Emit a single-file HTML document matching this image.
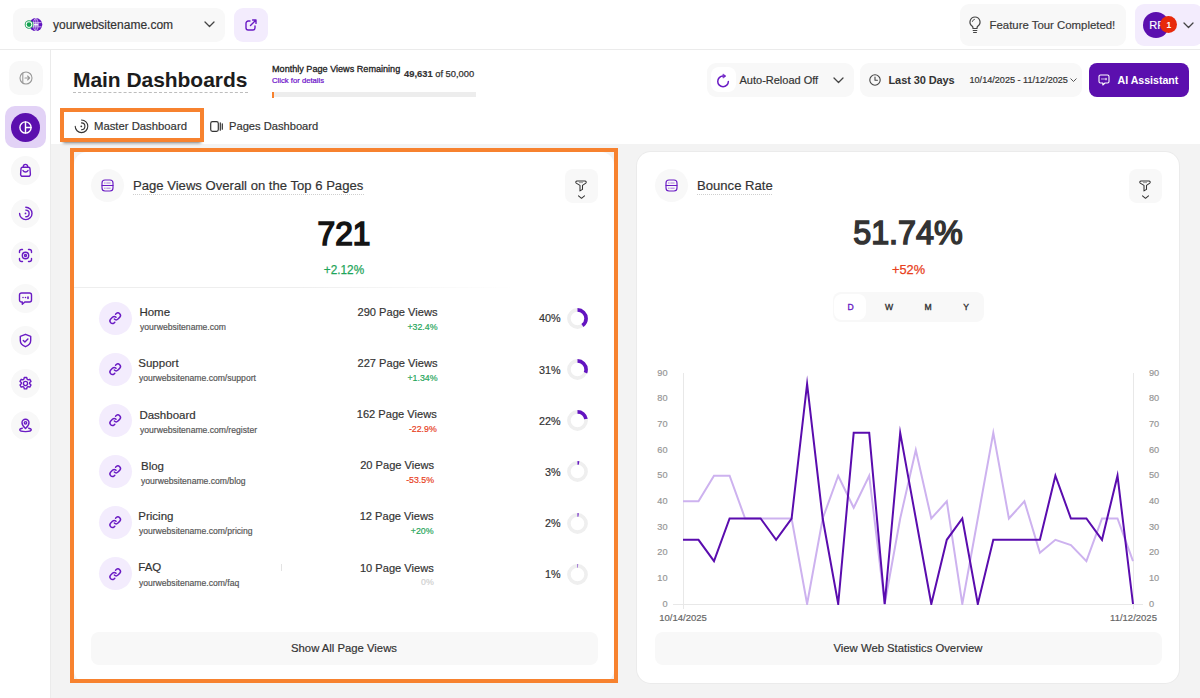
<!DOCTYPE html>
<html><head><meta charset="utf-8"><title>Main Dashboards</title>
<style>
*{box-sizing:border-box;margin:0;padding:0}
html,body{width:1200px;height:698px;overflow:hidden;background:#fff;font-family:"Liberation Sans",sans-serif;color:#333}
#topbar{position:absolute;left:0;top:0;width:1200px;height:50px;background:#fff;border-bottom:1px solid #ebebeb}
#sidebar{position:absolute;left:0;top:50px;width:51px;height:648px;background:#fff;border-right:1px solid #ebebeb}
#header{position:absolute;left:51px;top:50px;width:1149px;height:94px;background:#fff}
#content{position:absolute;left:51px;top:144px;width:1149px;height:554px;background:#f3f3f3}
.t{position:absolute;white-space:nowrap;line-height:1;-webkit-text-stroke:0.18px currentColor}
.box{position:absolute;background:#f8f8f8;border-radius:9px}
.card{position:absolute;background:#fff;border-radius:13px}
svg{position:absolute;overflow:visible}
.ic{fill:none;stroke:#6a1bc4;stroke-width:1.4;stroke-linecap:round;stroke-linejoin:round}
.sb{position:absolute;left:11px;width:29px;height:29px;border-radius:50%;background:#f8f8f8}
.lk{position:absolute;left:99px;width:33px;height:33px;border-radius:50%;background:#f3ecfd}
.g{color:#1fa55a}.r{color:#e8401c}
.ax{color:#969696}
</style></head><body>
<div id="topbar"></div><div id="sidebar"></div><div id="header"></div><div id="content"></div>
<div class="box" style="left:13px;top:8px;width:212px;height:34px"></div>
<svg style="left:24px;top:17px" width="20" height="16" viewBox="0 0 20 16">
<circle cx="11.800" cy="7.600" r="6.500" fill="#6214c0"/>
<g stroke="#fff" stroke-width="0.700" fill="none" opacity=".85"><ellipse cx="11.800" cy="7.600" rx="2.400" ry="6.200"/><path d="M6 5.600h11.600M6 9.800h11.600M11.800 1.400v12.400"/></g><rect x="9.200" y="6.600" width="5" height="2" fill="#fff" opacity=".9"/>
<circle cx="5" cy="7.600" r="4.250" fill="#1fa55a"/><circle cx="5" cy="7.600" r="3.300" fill="#fff"/><circle cx="5" cy="7.600" r="2.300" fill="#12a150"/>
</svg>
<div class="t " style="top:29.2px;font-size:12px;margin-top:-0.8465em;left:53px;color:#333;">yourwebsitename.com</div>
<svg style="left:204px;top:21px" width="11" height="7" viewBox="0 0 11 7"><path d="M1 1l4.5 4.5L10 1" fill="none" stroke="#444" stroke-width="1.3" stroke-linecap="round" stroke-linejoin="round"/></svg>
<div class="box" style="left:234px;top:8px;width:34px;height:34px;background:#f3ecfd"></div>
<svg class="ic" style="left:245px;top:19px" width="12" height="12" viewBox="0 0 12 12"><path d="M5 2H3.2A2.2 2.2 0 0 0 1 4.200V8.800A2.200 2.200 0 0 0 3.200 11H7.800A2.200 2.200 0 0 0 10 8.800V7"/><path d="M5.500 6.500L10.800 1.200M7.600 1H11V4.400"/></svg>
<div class="box" style="left:960px;top:4px;width:166px;height:42px"></div>
<svg style="left:969px;top:16px" width="12" height="18" viewBox="0 0 12 18" fill="none" stroke="#444" stroke-width="1.2" stroke-linecap="round" stroke-linejoin="round"><path d="M6 1a5 5 0 0 0-3 9c.6.500 1 1.200 1 2v.500h4V12c0-.8.400-1.500 1-2a5 5 0 0 0-3-9z"/><path d="M4.200 14.500h3.600M4.600 16.500h2.800"/><path d="M3.300 5.500A2.800 2.800 0 0 1 5.500 3.300" stroke-width="0.9"/></svg>
<div class="t " style="top:29.2px;font-size:11.4px;margin-top:-0.8465em;left:989.5px;color:#3a3a3a;">Feature Tour Completed!</div>
<div class="box" style="left:1135px;top:4px;width:68px;height:42px;background:#f3ecfd"></div>
<div style="position:absolute;left:1143px;top:11.700px;width:26px;height:26px;border-radius:50%;background:#5b0fae"></div>
<div class="t " style="top:29px;font-size:11px;margin-top:-0.8465em;left:1149.3px;color:#fff;">RP</div>
<div style="position:absolute;left:1160.400px;top:16.200px;width:17px;height:17px;border-radius:50%;background:#e8290b"></div>
<div class="t " style="top:27.8px;font-size:8.5px;margin-top:-0.8465em;left:1158.8px;width:20px;text-align:center;color:#fff;font-weight:700;-webkit-text-stroke:0;">1</div>
<svg style="left:1183px;top:22px" width="11" height="7" viewBox="0 0 11 7"><path d="M1 1l4.500 4.500L10 1" fill="none" stroke="#444" stroke-width="1.3" stroke-linecap="round" stroke-linejoin="round"/></svg>
<div class="box" style="left:9px;top:61px;width:34px;height:34px;border-radius:10px"></div>
<svg style="left:19px;top:71px" width="14" height="14" viewBox="0 0 14 14" fill="none" stroke="#999" stroke-width="1.1" stroke-linecap="round" stroke-linejoin="round"><circle cx="7" cy="7" r="6"/><path d="M3.800 2v10M6 7h4.500M8.600 5l2 2-2 2"/></svg>
<div class="box" style="left:5px;top:106px;width:41px;height:42px;border-radius:10px;background:#e2d2f6"></div>
<div style="position:absolute;left:11px;top:112.500px;width:29px;height:29px;border-radius:50%;background:#5b0fae"></div>
<svg style="left:19px;top:120.500px" width="13" height="13" viewBox="0 0 13 13" fill="none" stroke="#fff" stroke-width="1.4" stroke-linecap="round"><circle cx="6.500" cy="6.500" r="5.600"/><path d="M6.500 1v11M6.500 6.500H12"/></svg>
<div class="sb" style="top:155.5px"></div><svg class="ic" style="left:18px;top:162.5px" width="15" height="15" viewBox="0 0 15 15"><path d="M3 5.800a1.500 1.500 0 0 1 1.500-1.500h6a1.500 1.500 0 0 1 1.500 1.500l.4 5.400a2 2 0 0 1-2 2.100H4.600a2 2 0 0 1-2-2.100z"/><path d="M5.300 4.300V3.600a2.200 2.200 0 0 1 4.400 0v.7"/><path d="M5 7.500c.5 1 1.500 1.500 2.500 1.500S9.500 8.500 10 7.500"/></svg>
<div class="sb" style="top:198.5px"></div><svg class="ic" style="left:18px;top:205.5px" width="15" height="15" viewBox="0 0 15 15"><path d="M7.800 1.200A6.200 6.200 0 1 1 1.600 7.400"/><path d="M7.800 4.100A3.300 3.300 0 0 1 7.800 10.700"/><circle cx="7.500" cy="7.400" r="0.900" fill="#6a1bc4" stroke="none"/></svg>
<div class="sb" style="top:241.0px"></div><svg class="ic" style="left:18px;top:248.0px" width="15" height="15" viewBox="0 0 15 15"><path d="M1.500 4.500V3.500a2 2 0 0 1 2-2h1M10.500 1.500h1a2 2 0 0 1 2 2v1M13.500 10.500v1a2 2 0 0 1-2 2h-1M4.500 13.500h-1a2 2 0 0 1-2-2v-1"/><circle cx="7.500" cy="7.500" r="3.200"/><circle cx="7.500" cy="7.500" r="1"/></svg>
<div class="sb" style="top:283.5px"></div><svg class="ic" style="left:18px;top:290.5px" width="15" height="15" viewBox="0 0 15 15"><path d="M3.500 2h8a2 2 0 0 1 2 2v5a2 2 0 0 1-2 2H6.800L4.300 13.200V11H3.500a2 2 0 0 1-2-2V4a2 2 0 0 1 2-2z"/><path d="M5 6.500h.01M7.500 6.500h.01M10 6v1.500" stroke-width="1.600"/></svg>
<div class="sb" style="top:326.0px"></div><svg class="ic" style="left:18px;top:333.0px" width="15" height="15" viewBox="0 0 15 15"><path d="M7.500 1.300l5.200 2v4.200c0 3-2.200 5-5.200 6.200-3-1.200-5.200-3.200-5.200-6.200V3.300z"/><path d="M5.300 7.500l1.600 1.600 3-3"/></svg>
<div class="sb" style="top:368.5px"></div><svg class="ic" style="left:18px;top:375.5px" width="15" height="15" viewBox="0 0 15 15"><circle cx="7.500" cy="7.500" r="2.100"/><path d="M6.300 1.500h2.400l.4 1.700 1 .6 1.700-.5 1.200 2.100-1.300 1.200v1.200l1.300 1.200-1.200 2.100-1.700-.5-1 .6-.4 1.700H6.300l-.4-1.700-1-.6-1.700.5-1.200-2.100 1.300-1.200V6.600L2 5.400l1.200-2.100 1.700.5 1-.6z"/></svg>
<div class="sb" style="top:411.0px"></div><svg class="ic" style="left:18px;top:418.0px" width="15" height="15" viewBox="0 0 15 15"><path d="M7.500 10.500s3.500-3 3.500-5.700a3.500 3.500 0 0 0-7 0c0 2.700 3.500 5.700 3.500 5.700z"/><circle cx="7.500" cy="4.800" r="1.200"/><path d="M4.300 10.200c-1.600.3-2.600.9-2.600 1.600 0 1 2.600 1.800 5.800 1.800s5.800-.8 5.800-1.800c0-.7-1-1.300-2.600-1.600"/></svg>
<div class="t " style="top:86.6px;font-size:21px;margin-top:-0.8465em;left:73px;font-weight:700;color:#1c1c1c;letter-spacing:-0.05px;-webkit-text-stroke:0;">Main Dashboards</div>
<div style="position:absolute;left:73px;top:92px;width:175px;height:0;border-top:1px dashed #bdbdbd"></div>
<div class="t " style="top:73px;font-size:9.1px;margin-top:-0.8465em;left:272px;color:#222;-webkit-text-stroke:0.3px #222;">Monthly Page Views Remaining</div>
<div class="t " style="top:83.5px;font-size:7.7px;margin-top:-0.8465em;left:272px;color:#6a0dc9;-webkit-text-stroke:0.2px #6a0dc9;">Click for details</div>
<div class="t " style="top:78px;font-size:9.35px;margin-top:-0.8465em;left:404px;color:#333;"><b>49,631</b> <span style="-webkit-text-stroke:0.25px #333">of 50,000</span></div>
<div style="position:absolute;left:272px;top:91.500px;width:204px;height:5.800px;background:#ededed"></div><div style="position:absolute;left:272px;top:91.500px;width:1.600px;height:6px;background:#f7822f"></div>
<div class="box" style="left:707px;top:63px;width:147px;height:34px"></div>
<div style="position:absolute;left:711px;top:67px;width:24.500px;height:25.300px;border-radius:8px;background:#fff"></div>
<svg class="ic" style="left:717px;top:73.500px;stroke-width:1.500" width="13" height="13" viewBox="0 0 13 13"><path d="M11.350 7.400A5.300 5.300 0 1 1 6.050 2.100"/><path d="M6.300 0.200L8.900 2.100 6.300 3.900z" fill="#6a1bc4" stroke-width=".6"/></svg>
<div class="t " style="top:84px;font-size:11px;margin-top:-0.8465em;left:739.5px;color:#333;">Auto-Reload Off</div>
<svg style="left:832.500px;top:77px" width="11" height="7" viewBox="0 0 11 7"><path d="M1 1l4.500 4.500L10 1" fill="none" stroke="#444" stroke-width="1.300" stroke-linecap="round" stroke-linejoin="round"/></svg>
<div class="box" style="left:860px;top:63px;width:222px;height:34px"></div>
<svg style="left:869px;top:74px" width="12" height="12" viewBox="0 0 12 12" fill="none" stroke="#444" stroke-width="1.100" stroke-linecap="round" stroke-linejoin="round"><circle cx="6" cy="6" r="5.200"/><path d="M6 3v3.200h2.400"/></svg>
<div class="t " style="top:84px;font-size:11px;margin-top:-0.8465em;left:888.5px;font-weight:700;color:#333;letter-spacing:-0.1px;-webkit-text-stroke:0;">Last 30 Days</div>
<div class="t " style="top:83.3px;font-size:9.1px;margin-top:-0.8465em;left:969.5px;color:#333;">10/14/2025 - 11/12/2025</div>
<svg style="left:1070px;top:77.500px" width="7" height="5" viewBox="0 0 7 5"><path d="M.8.800l2.700 2.700L6.200.8" fill="none" stroke="#555" stroke-width="1" stroke-linecap="round" stroke-linejoin="round"/></svg>
<div class="box" style="left:1088.500px;top:63px;width:100px;height:34px;background:#5b0fae;border-radius:8px"></div>
<svg style="left:1097.500px;top:74px" width="12" height="12" viewBox="0 0 12 12" fill="none" stroke="#fff" stroke-width="1.100" stroke-linecap="round" stroke-linejoin="round"><path d="M2.500 1h7A1.500 1.500 0 0 1 11 2.500v5A1.500 1.500 0 0 1 9.500 9H7L4.800 11V9H2.500A1.500 1.500 0 0 1 1 7.500v-5A1.500 1.500 0 0 1 2.500 1z"/><path d="M4 5h.01M6 5h.01M8 4.500v1.200" stroke-width="1.300"/></svg>
<div class="t " style="top:84px;font-size:10.6px;margin-top:-0.8465em;left:1117.5px;font-weight:700;color:#fff;-webkit-text-stroke:0;">AI Assistant</div>
<div style="position:absolute;left:60px;top:108px;width:144px;height:34px;border:4px solid #f7822f;background:#fff;box-shadow:0 4px 3px -3px rgba(0,0,0,.55)"></div>
<svg style="left:74px;top:119px" width="15" height="15" viewBox="0 0 15 15" fill="none" stroke="#333" stroke-width="1.100" stroke-linecap="round"><path d="M7.500 1A6.300 6.300 0 1 1 1.200 7.300"/><path d="M7.500 3.900A3.400 3.400 0 0 1 7.500 10.700"/><circle cx="7.300" cy="7.300" r="0.900" fill="#333" stroke="none"/></svg>
<div class="t " style="top:130.2px;font-size:11.3px;margin-top:-0.8465em;left:94px;color:#333;">Master Dashboard</div>
<svg style="left:210px;top:120.500px" width="13" height="11" viewBox="0 0 13 11" fill="none" stroke="#333" stroke-width="1.200" stroke-linecap="round"><rect x=".7" y=".7" width="7.600" height="9.600" rx="1.800"/><path d="M10.300 1.800v7.400M12.300 2.800v5.400"/></svg>
<div class="t " style="top:130.2px;font-size:11.15px;margin-top:-0.8465em;left:229px;color:#333;">Pages Dashboard</div>
<div class="card" style="left:74px;top:152px;width:540px;height:531px"></div>
<div class="card" style="left:637px;top:151.500px;width:542px;height:531.500px;border-radius:14px;box-shadow:0 0 0 1px #ebebeb"></div>
<div style="position:absolute;left:91.0px;top:169px;width:33px;height:33px;border-radius:50%;background:#f8f8f8"></div>
<svg class="ic" style="left:101.0px;top:178.500px" width="13" height="13" viewBox="0 0 13 13"><rect x="1" y="1" width="11" height="11" rx="3" stroke-width="1.150"/><path d="M1 6.500h11" stroke-width="1.050"/><path d="M3.500 4h.700M5.700 4h3.500M3.500 9.200h.700M5.700 9.200h3.500" stroke-width=".8" opacity=".7"/></svg>
<div class="box" style="left:565px;top:169px;width:33px;height:33.500px;border-radius:8px"></div>
<svg style="left:575.2px;top:180.200px" width="12" height="12" viewBox="0 0 12 12" fill="none" stroke="#333" stroke-width="1.050" stroke-linejoin="round"><path d="M2 1H10a1.200 1.200 0 0 1 .8 2.100L7.500 5.400V9.400L5 10.900V5.400L1.200 3.100A1.200 1.200 0 0 1 2 1z"/><path d="M4 2.600h4" stroke-width=".9" opacity=".5"/></svg>
<svg style="left:577.7px;top:194.700px" width="7" height="5" viewBox="0 0 7 5"><path d="M.5.800l3 2.500L6.500.8" fill="none" stroke="#333" stroke-width="1.050" stroke-linecap="round" stroke-linejoin="round"/></svg>
<div style="position:absolute;left:655.0px;top:169px;width:33px;height:33px;border-radius:50%;background:#f8f8f8"></div>
<svg class="ic" style="left:665.0px;top:178.500px" width="13" height="13" viewBox="0 0 13 13"><rect x="1" y="1" width="11" height="11" rx="3" stroke-width="1.150"/><path d="M1 6.500h11" stroke-width="1.050"/><path d="M3.500 4h.700M5.700 4h3.500M3.500 9.200h.700M5.700 9.200h3.500" stroke-width=".8" opacity=".7"/></svg>
<div class="box" style="left:1129px;top:169px;width:33px;height:33.500px;border-radius:8px"></div>
<svg style="left:1139.2px;top:180.200px" width="12" height="12" viewBox="0 0 12 12" fill="none" stroke="#333" stroke-width="1.050" stroke-linejoin="round"><path d="M2 1H10a1.200 1.200 0 0 1 .8 2.100L7.500 5.400V9.400L5 10.900V5.400L1.200 3.100A1.200 1.200 0 0 1 2 1z"/><path d="M4 2.600h4" stroke-width=".9" opacity=".5"/></svg>
<svg style="left:1141.7px;top:194.700px" width="7" height="5" viewBox="0 0 7 5"><path d="M.5.800l3 2.500L6.500.8" fill="none" stroke="#333" stroke-width="1.050" stroke-linecap="round" stroke-linejoin="round"/></svg>
<div class="t " style="top:190px;font-size:13.1px;margin-top:-0.8465em;left:133px;color:#333;">Page Views Overall on the Top 6 Pages</div>
<div style="position:absolute;left:133px;top:193.500px;width:231px;border-top:1px dotted #cfcfcf"></div>
<div class="t " style="top:190px;font-size:13.1px;margin-top:-0.8465em;left:697px;color:#333;">Bounce Rate</div>
<div style="position:absolute;left:697px;top:193.500px;width:75px;border-top:1px dotted #cfcfcf"></div>
<div class="t " style="top:244.8px;font-size:33px;margin-top:-0.8465em;left:244.0px;width:200px;text-align:center;color:#141414;-webkit-text-stroke:1.700px #141414;transform:scaleX(.96);">721</div>
<div class="t g" style="top:274.4px;font-size:12.8px;margin-top:-0.8465em;left:294.0px;width:100px;text-align:center;-webkit-text-stroke:0.25px #1fa55a;transform:scaleX(.92);">+2.12%</div>
<div class="t " style="top:244.2px;font-size:32.5px;margin-top:-0.8465em;left:758.0px;width:300px;text-align:center;color:#333;-webkit-text-stroke:1.500px #333;transform:scaleX(.995);">51.74%</div>
<div class="t r" style="top:274.6px;font-size:12.8px;margin-top:-0.8465em;left:858.5px;width:100px;text-align:center;-webkit-text-stroke:0.25px #e8401c;">+52%</div>
<div style="position:absolute;left:74px;top:286.800px;width:440px;height:1px;background:linear-gradient(90deg,#eee 0,#eee 50%,rgba(238,238,238,0) 100%)"></div>
<div class="lk" style="top:301.7px"></div><svg class="ic" style="left:109.300px;top:312.0px;stroke-width:1.550" width="12.400" height="12.400" viewBox="0 0 13 13"><path d="M5.600 7.400a2.700 2.700 0 0 0 3.800 0l2-2a2.700 2.700 0 0 0-3.800-3.800l-.7.700"/><path d="M7.400 5.600a2.700 2.700 0 0 0-3.800 0l-2 2a2.700 2.700 0 0 0 3.800 3.800l.7-.7"/></svg>
<div class="t " style="top:316.4px;font-size:11.5px;margin-top:-0.8465em;left:139.4px;color:#333;">Home</div>
<div class="t " style="top:330.3px;font-size:8.6px;margin-top:-0.8465em;left:140.0px;color:#555;">yourwebsitename.com</div>
<div class="t " style="top:316.4px;font-size:11.1px;margin-top:-0.8465em;left:137.5px;width:300px;text-align:right;color:#333;">290 Page Views</div>
<div class="t " style="top:330.2px;font-size:8.8px;margin-top:-0.8465em;left:137.5px;width:300px;text-align:right;color:#1fa55a;">+32.4%</div>
<div class="t " style="top:322.6px;font-size:10.8px;margin-top:-0.8465em;left:260.70000000000005px;width:300px;text-align:right;color:#333;">40%</div>
<svg style="left:565.500px;top:307.1px" width="23" height="23" viewBox="0 0 23 23"><circle cx="11.500" cy="11.500" r="8.6" fill="none" stroke="#efefef" stroke-width="3.600"/><circle cx="11.500" cy="11.500" r="8.6" fill="none" stroke="#6314c0" stroke-width="3.600" stroke-dasharray="21.61 54.04" transform="rotate(-90 11.500 11.500)"/></svg>
<div class="lk" style="top:352.8px"></div><svg class="ic" style="left:109.300px;top:363.1px;stroke-width:1.550" width="12.400" height="12.400" viewBox="0 0 13 13"><path d="M5.600 7.400a2.700 2.700 0 0 0 3.800 0l2-2a2.700 2.700 0 0 0-3.800-3.800l-.7.700"/><path d="M7.400 5.600a2.700 2.700 0 0 0-3.800 0l-2 2a2.700 2.700 0 0 0 3.800 3.800l.7-.7"/></svg>
<div class="t " style="top:367.5px;font-size:11.5px;margin-top:-0.8465em;left:138.3px;color:#333;">Support</div>
<div class="t " style="top:381.4px;font-size:8.6px;margin-top:-0.8465em;left:138.9px;color:#555;">yourwebsitename.com/support</div>
<div class="t " style="top:367.5px;font-size:11.1px;margin-top:-0.8465em;left:137.5px;width:300px;text-align:right;color:#333;">227 Page Views</div>
<div class="t " style="top:381.3px;font-size:8.8px;margin-top:-0.8465em;left:137.5px;width:300px;text-align:right;color:#1fa55a;">+1.34%</div>
<div class="t " style="top:373.7px;font-size:10.8px;margin-top:-0.8465em;left:260.70000000000005px;width:300px;text-align:right;color:#333;">31%</div>
<svg style="left:565.500px;top:358.2px" width="23" height="23" viewBox="0 0 23 23"><circle cx="11.500" cy="11.500" r="8.6" fill="none" stroke="#efefef" stroke-width="3.600"/><circle cx="11.500" cy="11.500" r="8.6" fill="none" stroke="#6314c0" stroke-width="3.600" stroke-dasharray="16.75 54.04" transform="rotate(-90 11.500 11.500)"/></svg>
<div class="lk" style="top:403.9px"></div><svg class="ic" style="left:109.300px;top:414.2px;stroke-width:1.550" width="12.400" height="12.400" viewBox="0 0 13 13"><path d="M5.600 7.400a2.700 2.700 0 0 0 3.800 0l2-2a2.700 2.700 0 0 0-3.800-3.800l-.7.700"/><path d="M7.400 5.600a2.700 2.700 0 0 0-3.800 0l-2 2a2.700 2.700 0 0 0 3.800 3.800l.7-.7"/></svg>
<div class="t " style="top:419.4px;font-size:11.5px;margin-top:-0.8465em;left:139.4px;color:#333;">Dashboard</div>
<div class="t " style="top:433.3px;font-size:8.6px;margin-top:-0.8465em;left:140.0px;color:#555;">yourwebsitename.com/register</div>
<div class="t " style="top:418.6px;font-size:11.1px;margin-top:-0.8465em;left:136.75px;width:300px;text-align:right;color:#333;">162 Page Views</div>
<div class="t " style="top:432.4px;font-size:8.8px;margin-top:-0.8465em;left:136.75px;width:300px;text-align:right;color:#e8401c;">-22.9%</div>
<div class="t " style="top:424.8px;font-size:10.8px;margin-top:-0.8465em;left:260.70000000000005px;width:300px;text-align:right;color:#333;">22%</div>
<svg style="left:565.500px;top:409.3px" width="23" height="23" viewBox="0 0 23 23"><circle cx="11.500" cy="11.500" r="8.6" fill="none" stroke="#efefef" stroke-width="3.600"/><circle cx="11.500" cy="11.500" r="8.6" fill="none" stroke="#6314c0" stroke-width="3.600" stroke-dasharray="11.89 54.04" transform="rotate(-90 11.500 11.500)"/></svg>
<div class="lk" style="top:455.0px"></div><svg class="ic" style="left:109.300px;top:465.3px;stroke-width:1.550" width="12.400" height="12.400" viewBox="0 0 13 13"><path d="M5.600 7.400a2.700 2.700 0 0 0 3.800 0l2-2a2.700 2.700 0 0 0-3.800-3.800l-.7.700"/><path d="M7.400 5.600a2.700 2.700 0 0 0-3.800 0l-2 2a2.700 2.700 0 0 0 3.800 3.800l.7-.7"/></svg>
<div class="t " style="top:470.5px;font-size:11.5px;margin-top:-0.8465em;left:141px;color:#333;">Blog</div>
<div class="t " style="top:484.4px;font-size:8.6px;margin-top:-0.8465em;left:141px;color:#555;">yourwebsitename.com/blog</div>
<div class="t " style="top:469.7px;font-size:11.1px;margin-top:-0.8465em;left:134.0px;width:300px;text-align:right;color:#333;">20 Page Views</div>
<div class="t " style="top:483.5px;font-size:8.8px;margin-top:-0.8465em;left:134.0px;width:300px;text-align:right;color:#e8401c;">-53.5%</div>
<div class="t " style="top:475.9px;font-size:10.8px;margin-top:-0.8465em;left:260.70000000000005px;width:300px;text-align:right;color:#333;">3%</div>
<svg style="left:565.500px;top:460.4px" width="23" height="23" viewBox="0 0 23 23"><circle cx="11.500" cy="11.500" r="8.6" fill="none" stroke="#efefef" stroke-width="3.600"/><circle cx="11.500" cy="11.500" r="8.6" fill="none" stroke="#6314c0" stroke-width="3.600" stroke-dasharray="1.62 54.04" transform="rotate(-90 11.500 11.500)"/></svg>
<div class="lk" style="top:506.1px"></div><svg class="ic" style="left:109.300px;top:516.4px;stroke-width:1.550" width="12.400" height="12.400" viewBox="0 0 13 13"><path d="M5.600 7.400a2.700 2.700 0 0 0 3.800 0l2-2a2.700 2.700 0 0 0-3.800-3.800l-.7.700"/><path d="M7.400 5.600a2.700 2.700 0 0 0-3.800 0l-2 2a2.700 2.700 0 0 0 3.800 3.800l.7-.7"/></svg>
<div class="t " style="top:520.8px;font-size:11.5px;margin-top:-0.8465em;left:138.3px;color:#333;">Pricing</div>
<div class="t " style="top:534.7px;font-size:8.6px;margin-top:-0.8465em;left:138.9px;color:#555;">yourwebsitename.com/pricing</div>
<div class="t " style="top:520.8px;font-size:11.1px;margin-top:-0.8465em;left:133.5px;width:300px;text-align:right;color:#333;">12 Page Views</div>
<div class="t " style="top:534.6px;font-size:8.8px;margin-top:-0.8465em;left:133.5px;width:300px;text-align:right;color:#1fa55a;">+20%</div>
<div class="t " style="top:527.0px;font-size:10.8px;margin-top:-0.8465em;left:260.70000000000005px;width:300px;text-align:right;color:#333;">2%</div>
<svg style="left:565.500px;top:511.5px" width="23" height="23" viewBox="0 0 23 23"><circle cx="11.500" cy="11.500" r="8.6" fill="none" stroke="#efefef" stroke-width="3.600"/><circle cx="11.500" cy="11.500" r="8.6" fill="none" stroke="#6314c0" stroke-width="3.600" stroke-dasharray="1.08 54.04" transform="rotate(-90 11.500 11.500)"/></svg>
<div class="lk" style="top:557.2px"></div><svg class="ic" style="left:109.300px;top:567.5px;stroke-width:1.550" width="12.400" height="12.400" viewBox="0 0 13 13"><path d="M5.600 7.400a2.700 2.700 0 0 0 3.800 0l2-2a2.700 2.700 0 0 0-3.800-3.800l-.7.700"/><path d="M7.400 5.600a2.700 2.700 0 0 0-3.800 0l-2 2a2.700 2.700 0 0 0 3.800 3.800l.7-.7"/></svg>
<div class="t " style="top:571.9px;font-size:11.5px;margin-top:-0.8465em;left:138.3px;color:#333;">FAQ</div>
<div class="t " style="top:585.8px;font-size:8.6px;margin-top:-0.8465em;left:138.9px;color:#555;">yourwebsitename.com/faq</div>
<div class="t " style="top:571.9px;font-size:11.1px;margin-top:-0.8465em;left:133.75px;width:300px;text-align:right;color:#333;">10 Page Views</div>
<div class="t " style="top:585.7px;font-size:8.8px;margin-top:-0.8465em;left:133.75px;width:300px;text-align:right;color:#cfcfcf;">0%</div>
<div class="t " style="top:578.1px;font-size:10.8px;margin-top:-0.8465em;left:260.70000000000005px;width:300px;text-align:right;color:#333;">1%</div>
<svg style="left:565.500px;top:562.6px" width="23" height="23" viewBox="0 0 23 23"><circle cx="11.500" cy="11.500" r="8.6" fill="none" stroke="#efefef" stroke-width="3.600"/><circle cx="11.500" cy="11.500" r="8.6" fill="none" stroke="#6314c0" stroke-width="3.600" stroke-dasharray="0.54 54.04" transform="rotate(-90 11.500 11.500)"/></svg>
<div class="box" style="left:91px;top:632px;width:507px;height:33px;border-radius:8px"></div>
<div class="t " style="top:652.4px;font-size:11.3px;margin-top:-0.8465em;left:194.0px;width:300px;text-align:center;color:#333;">Show All Page Views</div>
<div class="box" style="left:655px;top:632px;width:507px;height:33px;border-radius:8px"></div>
<div class="t " style="top:652.4px;font-size:11.3px;margin-top:-0.8465em;left:758.0px;width:300px;text-align:center;color:#333;">View Web Statistics Overview</div>
<div style="position:absolute;left:281px;top:564px;width:1px;height:7px;background:#e3e3e3"></div>
<div class="box" style="left:833px;top:292px;width:150.500px;height:30px;border-radius:8px"></div>
<div style="position:absolute;left:834.300px;top:294.300px;width:32.200px;height:25.400px;border-radius:8px;background:#fff"></div>
<div class="t " style="top:310.3px;font-size:8.6px;margin-top:-0.8465em;left:835.5px;width:30px;text-align:center;color:#6a1bc4;-webkit-text-stroke:0.35px #6a1bc4;">D</div>
<div class="t " style="top:310.3px;font-size:8.6px;margin-top:-0.8465em;left:874.0px;width:30px;text-align:center;color:#333;-webkit-text-stroke:0.35px #333;">W</div>
<div class="t " style="top:310.3px;font-size:8.6px;margin-top:-0.8465em;left:913.0px;width:30px;text-align:center;color:#333;-webkit-text-stroke:0.35px #333;">M</div>
<div class="t " style="top:310.3px;font-size:8.6px;margin-top:-0.8465em;left:951.0px;width:30px;text-align:center;color:#333;-webkit-text-stroke:0.35px #333;">Y</div>
<svg style="left:0;top:0" width="1200" height="698" viewBox="0 0 1200 698"><path d="M683.5 373V609M1133.5 373V609M673 604.5H1143" stroke="#e8e8e8" stroke-width="1" fill="none"/><clipPath id="ca"><rect x="682" y="372" width="452" height="233"/></clipPath><g clip-path="url(#ca)"><polyline points="683.0,501.3 698.5,501.3 714.0,475.7 729.6,475.7 745.1,518.5 760.6,518.5 776.1,518.5 791.6,518.5 807.1,604.0 822.7,518.5 838.2,475.7 853.7,507.8 869.2,475.7 884.7,604.0 900.2,518.5 915.8,450.0 931.3,518.5 946.8,501.3 962.3,604.0 977.8,518.5 993.3,432.8 1008.9,518.5 1024.4,501.3 1039.9,552.7 1055.4,539.8 1070.9,545.0 1086.4,561.1 1102.0,518.5 1117.5,518.5 1133.0,561.1" fill="none" stroke="#cdb2ef" stroke-width="2" stroke-linejoin="miter" stroke-miterlimit="10"/><polyline points="683.0,539.8 698.5,539.8 714.0,561.1 729.6,518.5 745.1,518.5 760.6,518.5 776.1,539.8 791.6,518.5 807.1,384.0 822.7,518.5 838.2,604.0 853.7,432.8 869.2,432.8 884.7,604.0 900.2,432.8 915.8,518.5 931.3,604.0 946.8,539.8 962.3,518.5 977.8,604.0 993.3,539.8 1008.9,539.8 1024.4,539.8 1039.9,539.8 1055.4,475.7 1070.9,518.5 1086.4,518.5 1102.0,539.8 1117.5,475.7 1133.0,604.0" fill="none" stroke="#5a0cae" stroke-width="2" stroke-linejoin="miter" stroke-miterlimit="10"/></g></svg>
<div class="t ax" style="top:607.3px;font-size:9.2px;margin-top:-0.8465em;left:627.5px;width:40px;text-align:right;">0</div>
<div class="t ax" style="top:607.3px;font-size:9.2px;margin-top:-0.8465em;left:1149px;">0</div>
<div class="t ax" style="top:581.6px;font-size:9.2px;margin-top:-0.8465em;left:627.5px;width:40px;text-align:right;">10</div>
<div class="t ax" style="top:581.6px;font-size:9.2px;margin-top:-0.8465em;left:1149px;">10</div>
<div class="t ax" style="top:556.0px;font-size:9.2px;margin-top:-0.8465em;left:627.5px;width:40px;text-align:right;">20</div>
<div class="t ax" style="top:556.0px;font-size:9.2px;margin-top:-0.8465em;left:1149px;">20</div>
<div class="t ax" style="top:530.3px;font-size:9.2px;margin-top:-0.8465em;left:627.5px;width:40px;text-align:right;">30</div>
<div class="t ax" style="top:530.3px;font-size:9.2px;margin-top:-0.8465em;left:1149px;">30</div>
<div class="t ax" style="top:504.6px;font-size:9.2px;margin-top:-0.8465em;left:627.5px;width:40px;text-align:right;">40</div>
<div class="t ax" style="top:504.6px;font-size:9.2px;margin-top:-0.8465em;left:1149px;">40</div>
<div class="t ax" style="top:479.0px;font-size:9.2px;margin-top:-0.8465em;left:627.5px;width:40px;text-align:right;">50</div>
<div class="t ax" style="top:479.0px;font-size:9.2px;margin-top:-0.8465em;left:1149px;">50</div>
<div class="t ax" style="top:453.3px;font-size:9.2px;margin-top:-0.8465em;left:627.5px;width:40px;text-align:right;">60</div>
<div class="t ax" style="top:453.3px;font-size:9.2px;margin-top:-0.8465em;left:1149px;">60</div>
<div class="t ax" style="top:427.6px;font-size:9.2px;margin-top:-0.8465em;left:627.5px;width:40px;text-align:right;">70</div>
<div class="t ax" style="top:427.6px;font-size:9.2px;margin-top:-0.8465em;left:1149px;">70</div>
<div class="t ax" style="top:402.0px;font-size:9.2px;margin-top:-0.8465em;left:627.5px;width:40px;text-align:right;">80</div>
<div class="t ax" style="top:402.0px;font-size:9.2px;margin-top:-0.8465em;left:1149px;">80</div>
<div class="t ax" style="top:376.3px;font-size:9.2px;margin-top:-0.8465em;left:627.5px;width:40px;text-align:right;">90</div>
<div class="t ax" style="top:376.3px;font-size:9.2px;margin-top:-0.8465em;left:1149px;">90</div>
<div class="t " style="top:621.3px;font-size:9.5px;margin-top:-0.8465em;left:633.0px;width:100px;text-align:center;color:#666;">10/14/2025</div>
<div class="t " style="top:621.3px;font-size:9.5px;margin-top:-0.8465em;left:1083.5px;width:100px;text-align:center;color:#666;">11/12/2025</div>
<div style="position:absolute;left:70px;top:148px;width:548px;height:535px;border:4px solid #f7822f"></div>
</body></html>
